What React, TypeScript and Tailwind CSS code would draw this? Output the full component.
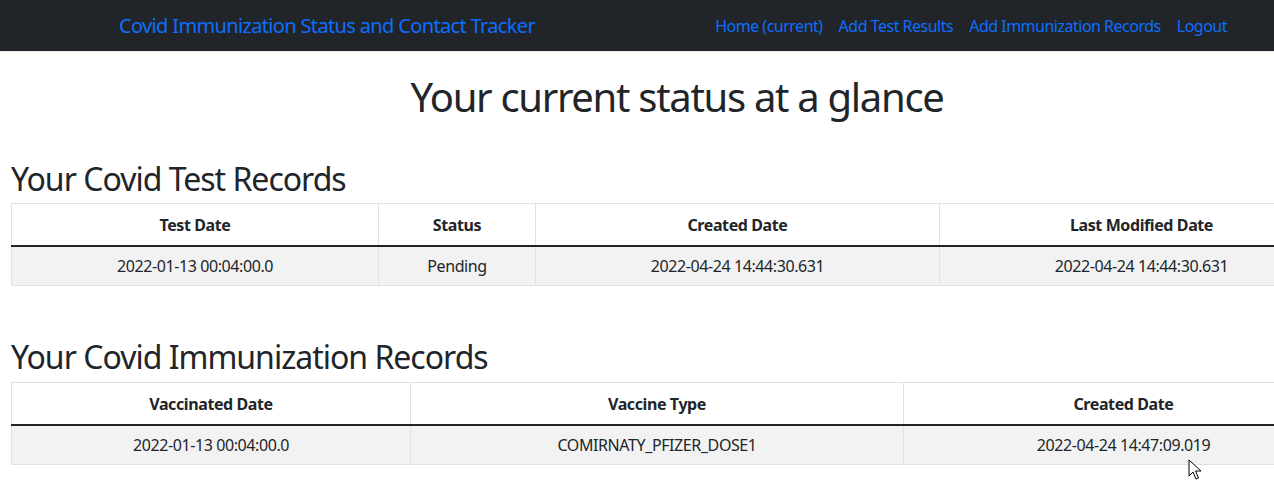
import React from "react";

const font = { fontFamily: '"Noto Sans", "Segoe UI", sans-serif' };

function Cursor() {
  return (
    <svg className="absolute left-[1188px] top-[459px]" width="14" height="22" viewBox="0 0 14 22">
      <path d="M1 1 L1 17 L5 13 L8 20 L10.5 19 L7.5 12 L13 12 Z" fill="white" stroke="black" strokeWidth="1" strokeLinejoin="round" />
    </svg>
  );
}

export default function App() {
  return (
    <div className="relative w-[1274px] h-[491px] overflow-hidden bg-white text-[#212529]" style={font}>
      <nav className="h-[52px] bg-[#212529] flex items-center border-b border-[#e5e5e5]">
        <div className="pl-[119px] text-[20px] text-[#0d6efd] tracking-[-0.65px]">Covid Immunization Status and Contact Tracker</div>
        <div className="ml-auto pr-[47px] flex gap-[16px] text-[16px] text-[#0d6efd] tracking-[-0.5px]">
          <span>Home (current)</span>
          <span>Add Test Results</span>
          <span>Add Immunization Records</span>
          <span>Logout</span>
        </div>
      </nav>
      <div className="w-[1368px]">
        <h1 className="w-[1354px] mt-[21px] text-center text-[40px] leading-[48px] tracking-[-1.3px]">Your current status at a glance</h1>
        <div className="pl-[11px]">
          <h2 className="mt-[39px] text-[32px] leading-[38px] tracking-[-1px]">Your Covid Test Records</h2>
          <table className="mt-[5px] border-collapse text-[16px] tracking-[-0.4px]">
            <thead>
              <tr className="h-[42px]">
                <th className="w-[367px] pt-[2px] border border-[#dee2e6] border-b-2 border-b-[#212529] font-bold">Test Date</th>
                <th className="w-[157px] pt-[2px] border border-[#dee2e6] border-b-2 border-b-[#212529] font-bold">Status</th>
                <th className="w-[404px] pt-[2px] border border-[#dee2e6] border-b-2 border-b-[#212529] font-bold">Created Date</th>
                <th className="w-[404px] pt-[2px] border border-[#dee2e6] border-b-2 border-b-[#212529] font-bold">Last Modified Date</th>
              </tr>
            </thead>
            <tbody>
              <tr className="h-[40px] bg-[#f2f2f2]">
                <td className="border border-[#dee2e6] text-center">2022-01-13 00:04:00.0</td>
                <td className="border border-[#dee2e6] text-center">Pending</td>
                <td className="border border-[#dee2e6] text-center">2022-04-24 14:44:30.631</td>
                <td className="border border-[#dee2e6] text-center">2022-04-24 14:44:30.631</td>
              </tr>
            </tbody>
          </table>
          <h2 className="mt-[52px] text-[32px] leading-[38px] tracking-[-1px]">Your Covid Immunization Records</h2>
          <table className="mt-[6px] border-collapse text-[16px] tracking-[-0.4px]">
            <thead>
              <tr className="h-[42px]">
                <th className="w-[399px] pt-[2px] border border-[#dee2e6] border-b-2 border-b-[#212529] font-bold">Vaccinated Date</th>
                <th className="w-[493px] pt-[2px] border border-[#dee2e6] border-b-2 border-b-[#212529] font-bold">Vaccine Type</th>
                <th className="w-[440px] pt-[2px] border border-[#dee2e6] border-b-2 border-b-[#212529] font-bold">Created Date</th>
              </tr>
            </thead>
            <tbody>
              <tr className="h-[40px] bg-[#f2f2f2]">
                <td className="border border-[#dee2e6] text-center">2022-01-13 00:04:00.0</td>
                <td className="border border-[#dee2e6] text-center">COMIRNATY_PFIZER_DOSE1</td>
                <td className="border border-[#dee2e6] text-center">2022-04-24 14:47:09.019</td>
              </tr>
            </tbody>
          </table>
        </div>
      </div>
      <Cursor />
    </div>
  );
}
